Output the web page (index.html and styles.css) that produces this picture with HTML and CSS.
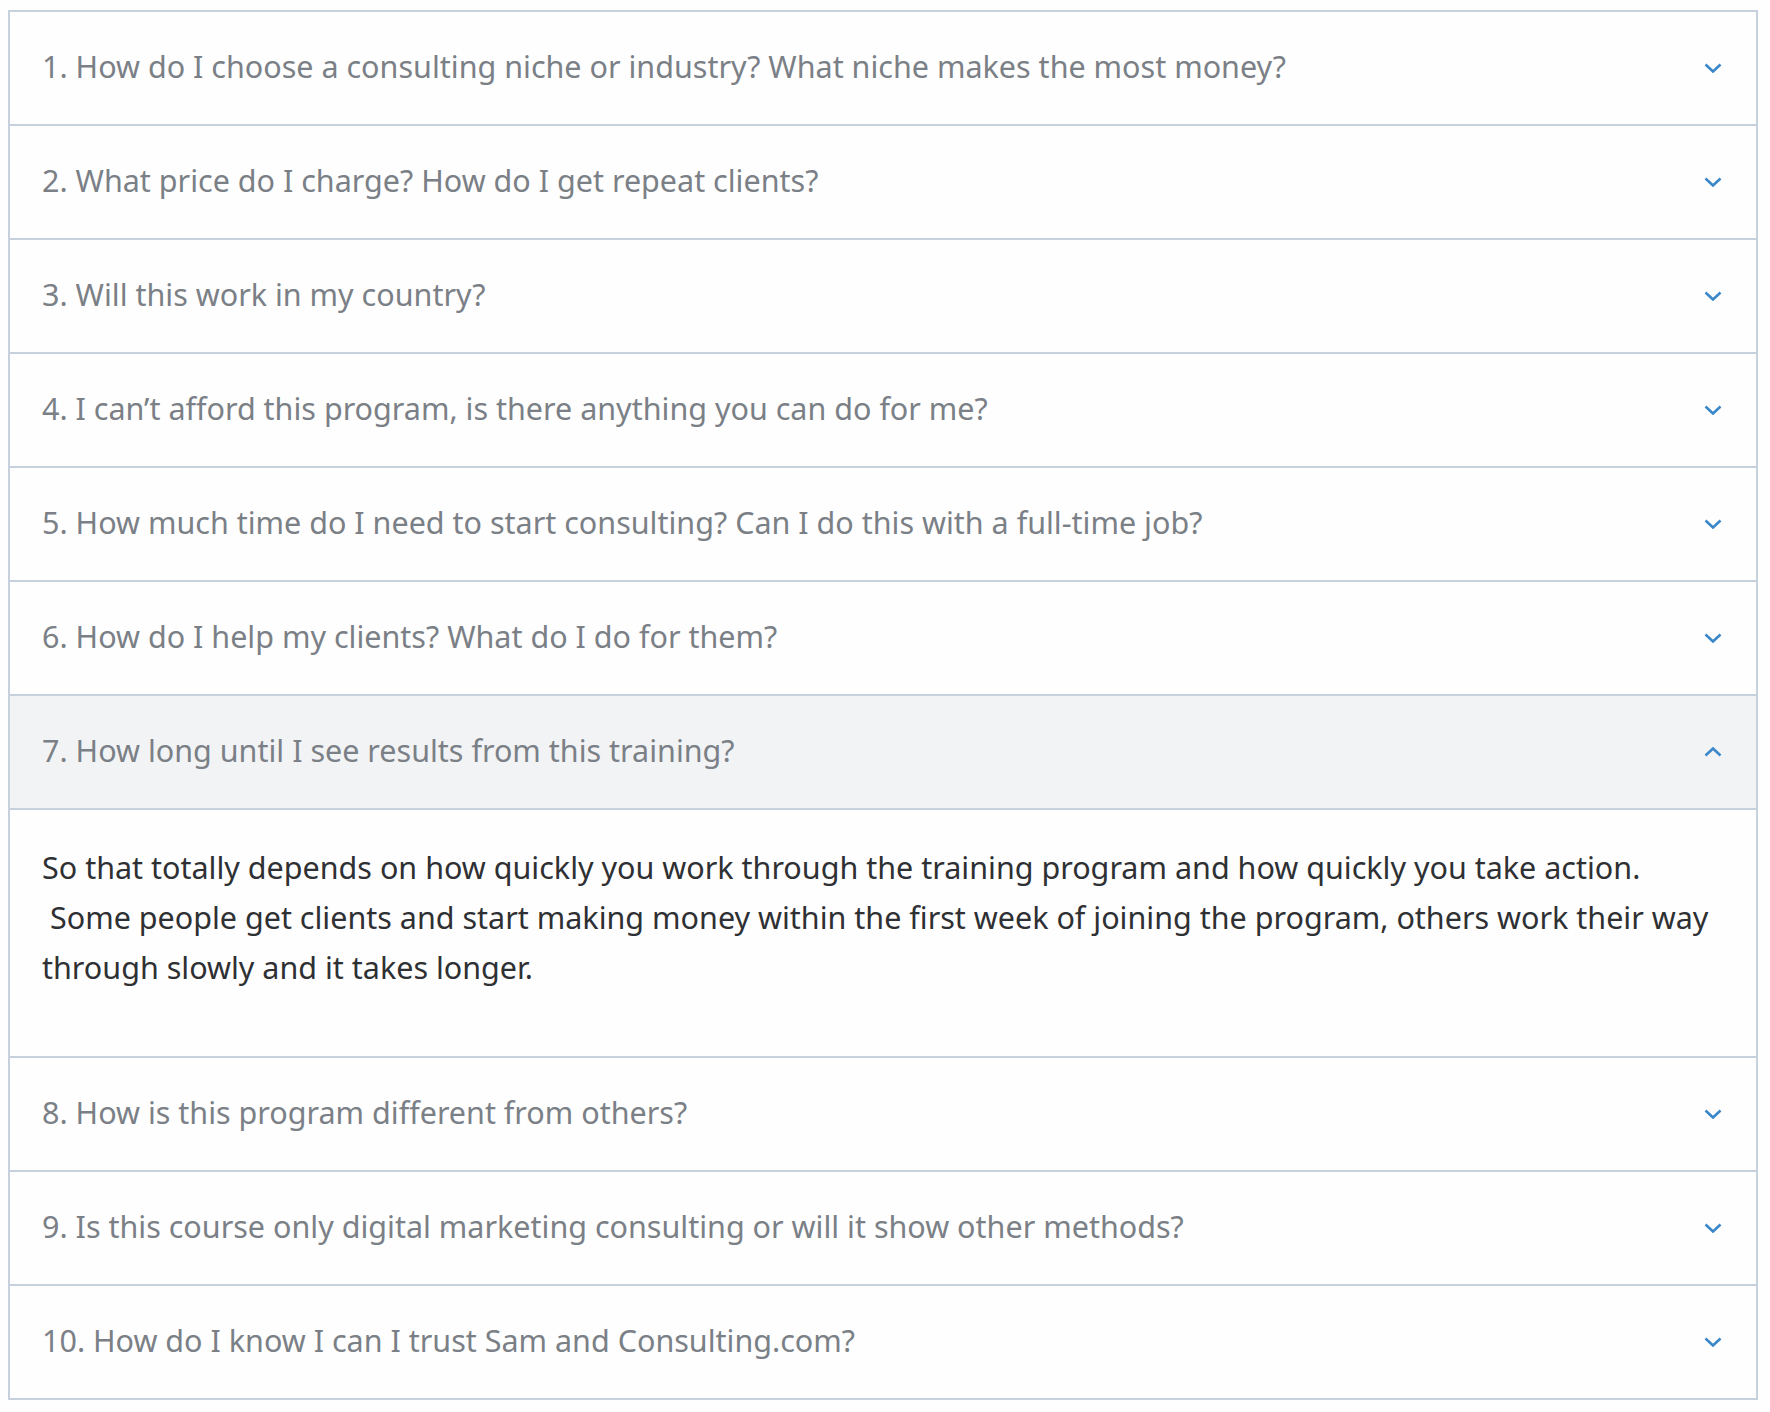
FILE: index.html
```html
<!DOCTYPE html>
<html lang="en">
<head>
    <meta charset="UTF-8">
    <title>FAQ</title>
    <link rel="stylesheet" href="styles.css">
</head>
<body>
<section class="faq">
    <div class="faq-item">
        <div class="faq-q"><span>1. How do I choose a consulting niche or industry? What niche makes the most money?</span><i class="arrow"><svg viewBox="0 0 18 10"><path d="M1.5 1.5L9 8.5L16.5 1.5"/></svg></i></div>
    </div>
    <div class="faq-item">
        <div class="faq-q"><span>2. What price do I charge? How do I get repeat clients?</span><i class="arrow"><svg viewBox="0 0 18 10"><path d="M1.5 1.5L9 8.5L16.5 1.5"/></svg></i></div>
    </div>
    <div class="faq-item">
        <div class="faq-q"><span>3. Will this work in my country?</span><i class="arrow"><svg viewBox="0 0 18 10"><path d="M1.5 1.5L9 8.5L16.5 1.5"/></svg></i></div>
    </div>
    <div class="faq-item">
        <div class="faq-q"><span>4. I can’t afford this program, is there anything you can do for me?</span><i class="arrow"><svg viewBox="0 0 18 10"><path d="M1.5 1.5L9 8.5L16.5 1.5"/></svg></i></div>
    </div>
    <div class="faq-item">
        <div class="faq-q"><span>5. How much time do I need to start consulting? Can I do this with a full-time job?</span><i class="arrow"><svg viewBox="0 0 18 10"><path d="M1.5 1.5L9 8.5L16.5 1.5"/></svg></i></div>
    </div>
    <div class="faq-item">
        <div class="faq-q"><span>6. How do I help my clients? What do I do for them?</span><i class="arrow"><svg viewBox="0 0 18 10"><path d="M1.5 1.5L9 8.5L16.5 1.5"/></svg></i></div>
    </div>
    <div class="faq-item open">
        <div class="faq-q"><span>7. How long until I see results from this training?</span><i class="arrow"><svg viewBox="0 0 18 10"><path d="M1.5 8.5L9 1.5L16.5 8.5"/></svg></i></div>
        <div class="faq-a">
            <p>So that totally depends on how quickly you work through the training program and how quickly you take action.<br>&nbsp;Some people get clients and start making money within the first week of joining the program, others work their way through slowly and it takes longer.</p>
        </div>
    </div>
    <div class="faq-item">
        <div class="faq-q"><span>8. How is this program different from others?</span><i class="arrow"><svg viewBox="0 0 18 10"><path d="M1.5 1.5L9 8.5L16.5 1.5"/></svg></i></div>
    </div>
    <div class="faq-item">
        <div class="faq-q"><span>9. Is this course only digital marketing consulting or will it show other methods?</span><i class="arrow"><svg viewBox="0 0 18 10"><path d="M1.5 1.5L9 8.5L16.5 1.5"/></svg></i></div>
    </div>
    <div class="faq-item">
        <div class="faq-q"><span>10. How do I know I can I trust Sam and Consulting.com?</span><i class="arrow"><svg viewBox="0 0 18 10"><path d="M1.5 1.5L9 8.5L16.5 1.5"/></svg></i></div>
    </div>
</section>
</body>
</html>
```

FILE: styles.css
```css
body,p{margin: 0;padding: 0;}
body{ padding: 10px 12px 0 8px; background: #fefefe; font-family: "Noto Sans", "Open Sans", sans-serif; }
.faq{ border: 2px solid #c6d1dd; border-bottom: none; }
.faq-item{ border-bottom: 2px solid #c6d1dd; }
.faq-q{ display: flex; align-items: center; justify-content: space-between; height: 112px; padding: 0 34px 0 32px;
        box-sizing: border-box; font-size: 30.5px; color: #7a8086; cursor: pointer; }
.faq-q span{ padding-bottom: 4px; }
.faq-item.open .faq-q{ background: #f2f3f5; border-bottom: 2px solid #c6d1dd; height: 114px; }
.arrow{ display: block; width: 18px; height: 10px; }
.arrow svg{ display: block; width: 18px; height: 10px; fill: none; stroke: #3b87c9; stroke-width: 2.6; }
.faq-a{ padding: 32px 32px 34px; }
.faq-a p{ font-size: 30.5px; line-height: 50px; color: #2e3033; margin-bottom: 30px; }
```
